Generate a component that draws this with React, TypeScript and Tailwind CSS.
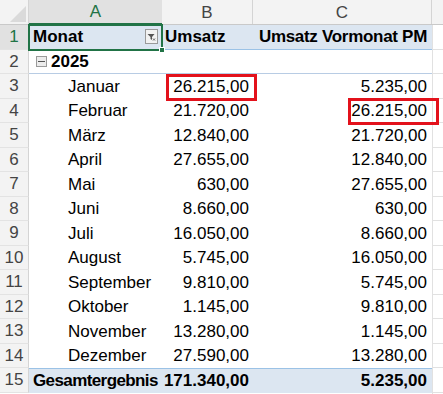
const months = [
  ["Januar", "26.215,00", "5.235,00"],
  ["Februar", "21.720,00", "26.215,00"],
  ["März", "12.840,00", "21.720,00"],
  ["April", "27.655,00", "12.840,00"],
  ["Mai", "630,00", "27.655,00"],
  ["Juni", "8.660,00", "630,00"],
  ["Juli", "16.050,00", "8.660,00"],
  ["August", "5.745,00", "16.050,00"],
  ["September", "9.810,00", "5.745,00"],
  ["Oktober", "1.145,00", "9.810,00"],
  ["November", "13.280,00", "1.145,00"],
  ["Dezember", "27.590,00", "13.280,00"],
]

function RowHead({ n, active }: { n: number; active?: boolean }) {
  return (
    <div
      className={`w-[29px] shrink-0 flex items-center justify-center border-r border-b border-r-[#d4d4d4] border-b-[#e3e3e3] ${
        active ? "bg-[#e1e1e1] text-[#217346]" : "bg-[#f3f3f3] text-[#444]"
      }`}
    >
      {n}
    </div>
  )
}

function ColD() {
  return <div className="flex-1 border-b border-[#e1e1e1]" />
}

function FilterIcon() {
  return (
    <div className="w-[13px] h-[15px] border border-[#9a9a9a] bg-[#f2f2f2] flex items-center justify-center">
      <svg width="9" height="8" viewBox="0 0 9 8">
        <path d="M0.5 1h7L5 4v3L3.5 6V4z" fill="#555" />
        <path d="M6 5.5l2 2M8 5.5l-2 2" stroke="#555" strokeWidth="0.9" />
      </svg>
    </div>
  )
}

export default function App() {
  return (
    <div
      className="relative w-[443px] h-[394px] overflow-hidden bg-white text-black text-[17px] leading-none"
      style={{ fontFamily: '"Liberation Sans", Arial, sans-serif' }}
    >
      {/* column header */}
      <div className="flex h-[25px] bg-[#f3f3f3] text-[#444] border-b border-[#c9c9c9]">
        <div className="w-[29px] shrink-0 relative border-r border-[#d4d4d4]">
          <svg className="absolute right-[2px] bottom-[2px]" width="16" height="16" viewBox="0 0 16 16">
            <path d="M16 0V16H0z" fill="#dadada" />
          </svg>
        </div>
        <div className="w-[133px] shrink-0 flex items-center justify-center bg-[#e1e1e1] text-[#217346] border-b-2 border-[#217346] -mb-px">
          A
        </div>
        <div className="w-[91px] shrink-0 flex items-center justify-center border-r border-[#d4d4d4]">B</div>
        <div className="w-[179px] shrink-0 flex items-center justify-center border-r border-[#d4d4d4]">C</div>
        <div className="flex-1" />
      </div>

      {/* row 1 */}
      <div className="flex h-[24.5px]">
        <RowHead n={1} active />
        <div className="flex w-[403px] shrink-0 bg-[#dce6f1] border-b border-[#9bc2e6] font-bold">
          <div className="w-[133px] flex items-center justify-between pl-[4px] pr-[4px]">
            <span>Monat</span>
            <FilterIcon />
          </div>
          <div className="w-[91px] flex items-center pl-[3px]">Umsatz</div>
          <div className="w-[179px] flex items-center justify-end pr-[5px] tracking-[-0.3px]">Umsatz Vormonat PM</div>
        </div>
        <ColD />
      </div>

      {/* row 2 */}
      <div className="flex h-[24.5px]">
        <RowHead n={2} />
        <div className="flex w-[403px] shrink-0 items-center border-b border-[#b8cce4] font-bold pl-[7px]">
          <div className="w-[11px] h-[11px] border border-[#9a9a9a] bg-[#ececec] flex items-center justify-center mr-[4px]">
            <div className="w-[7px] h-px bg-[#555]" />
          </div>
          2025
        </div>
        <ColD />
      </div>

      {months.map(([m, a, b], i) => (
        <div key={m} className="flex h-[24.5px]">
          <RowHead n={i + 3} />
          <div className="flex w-[403px] shrink-0">
            <div className="w-[133px] flex items-center pl-[39px]">{m}</div>
            <div className="w-[91px] flex items-center justify-end pr-[4px]">{a}</div>
            <div className="w-[179px] flex items-center justify-end pr-[5px]">{b}</div>
          </div>
          <ColD />
        </div>
      ))}

      {/* row 15 */}
      <div className="flex h-[24.5px]">
        <RowHead n={15} />
        <div className="flex w-[403px] shrink-0 bg-[#dce6f1] border-t border-[#9bc2e6] font-bold">
          <div className="w-[133px] flex items-center pl-[4px] tracking-[-0.6px]">Gesamtergebnis</div>
          <div className="w-[91px] flex items-center justify-end pr-[4px]">171.340,00</div>
          <div className="w-[179px] flex items-center justify-end pr-[5px]">5.235,00</div>
        </div>
        <ColD />
      </div>

      {/* column D separator */}
      <div className="absolute left-[432px] top-[25px] bottom-0 w-px bg-[#e1e1e1]" />

      {/* selection A1 */}
      <div className="absolute left-[28px] top-[24px] w-[135px] h-[27px] border-2 border-[#217346]" />
      <div className="absolute left-[159px] top-[47px] w-[6px] h-[6px] bg-[#217346] border border-white" />

      {/* red highlights */}
      <div className="absolute left-[166px] top-[74px] w-[91px] h-[27px] border-[3px] border-[#e3111b]" />
      <div className="absolute left-[348px] top-[98px] w-[91px] h-[27px] border-[3px] border-[#e3111b]" />
    </div>
  )
}
